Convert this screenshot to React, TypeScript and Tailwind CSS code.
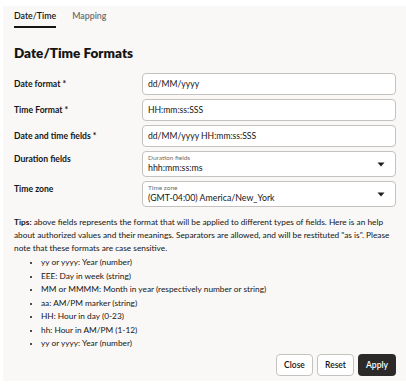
import React, { useState } from 'react';

const rows = [
  { label: 'Date format *', value: 'dd/MM/yyyy', kind: 'input' },
  { label: 'Time Format *', value: 'HH:mm:ss:SSS', kind: 'input' },
  { label: 'Date and time fields *', value: 'dd/MM/yyyy HH:mm:ss:SSS', kind: 'input' },
  { label: 'Duration fields', value: 'hhh:mm:ss:ms', kind: 'select', hint: 'Duration fields' },
  { label: 'Time zone', value: '(GMT-04:00) America/New_York', kind: 'select', hint: 'Time zone' },
];

const tips = [
  'yy or yyyy: Year (number)',
  'EEE: Day in week (string)',
  'MM or MMMM: Month in year (respectively number or string)',
  'aa: AM/PM marker (string)',
  'HH: Hour in day (0-23)',
  'hh: Hour in AM/PM (1-12)',
  'yy or yyyy: Year (number)',
];

const Caret = () => (
  <svg width="8" height="5" viewBox="0 0 8 5" className="shrink-0">
    <path d="M0.5 0.5 L7.5 0.5 L4 4.5 Z" fill="#1f1e1c" />
  </svg>
);

export default function App() {
  const [tab, setTab] = useState('date');

  return (
    <div className="w-[406px] h-[384px] bg-white overflow-hidden" style={{ fontFamily: 'Lato, "Noto Sans", sans-serif' }}>
      <div className="ml-[3px] mt-[6px] h-[375px] bg-[#f9f8f6] pl-[11px] pr-[10px] flex flex-col text-[#161513]">
        {/* Tabs */}
        <div className="flex gap-[16px] text-[8.8px] font-semibold">
          <button onClick={() => setTab('date')} className="flex flex-col pt-[3px] leading-[14px]">
            <span className={tab === 'date' ? 'text-[#161513]' : 'text-[#6f6c69]'}>Date/Time</span>
            <span className={`mt-[3px] h-[2px] w-full ${tab === 'date' ? 'bg-[#161513]' : 'bg-transparent'}`} />
          </button>
          <button onClick={() => setTab('map')} className="flex flex-col pt-[3px] leading-[14px]">
            <span className={tab === 'map' ? 'text-[#161513]' : 'text-[#6f6c69]'}>Mapping</span>
            <span className={`mt-[3px] h-[2px] w-full ${tab === 'map' ? 'bg-[#161513]' : 'bg-transparent'}`} />
          </button>
        </div>

        <h1 className="mt-[15px] text-[13.5px] font-extrabold leading-[20px]">Date/Time Formats</h1>

        {/* Form */}
        <div className="mt-[10px] flex flex-col gap-[4px]">
          {rows.map((r) => (
            <div key={r.label} className="flex items-start">
              <div className={`w-[128px] text-[8.6px] font-bold leading-[14px] ${r.kind === 'input' ? 'pt-[4px]' : 'pt-[1px]'}`}>
                {r.label}
              </div>
              {r.kind === 'input' ? (
                <div className="flex-1 h-[22px] bg-white border border-[#c4c2bf] rounded-[4px] px-[5px] flex items-center text-[8.6px]">
                  {r.value}
                </div>
              ) : (
                <div className="flex-1 h-[26px] bg-white border border-[#c4c2bf] rounded-[4px] pl-[5px] pr-[10px] flex items-center">
                  <div className="flex-1 flex flex-col leading-none">
                    <span className="text-[6.5px] text-[#6f6c69]">{r.hint}</span>
                    <span className="mt-[2px] text-[8.8px]">{r.value}</span>
                  </div>
                  <Caret />
                </div>
              )}
            </div>
          ))}
        </div>

        {/* Tips */}
        <p className="mt-[9px] text-[8.3px] leading-[13px] text-[#161513]">
          <span className="font-bold">Tips:</span> above fields represents the format that will be applied to different types of fields. Here is an help about authorized values and their meanings. Separators are allowed, and will be restituted "as is". Please note that these formats are case sensitive.
        </p>
        <ul className="mt-[1px] pl-[27px] text-[8.3px] leading-[13.5px] list-disc marker:text-[6px]">
          {tips.map((t, i) => (
            <li key={i}>{t}</li>
          ))}
        </ul>

        {/* Actions */}
        <div className="mt-auto mb-[5px] flex justify-end gap-[4px] text-[8.5px] font-semibold">
          <button className="w-[37px] h-[22px] bg-white border border-[#c4c2bf] rounded-[4px]">Close</button>
          <button className="w-[37px] h-[22px] bg-white border border-[#c4c2bf] rounded-[4px]">Reset</button>
          <button className="w-[38px] h-[22px] bg-[#2b2a28] text-white rounded-[4px]">Apply</button>
        </div>
      </div>
    </div>
  );
}
